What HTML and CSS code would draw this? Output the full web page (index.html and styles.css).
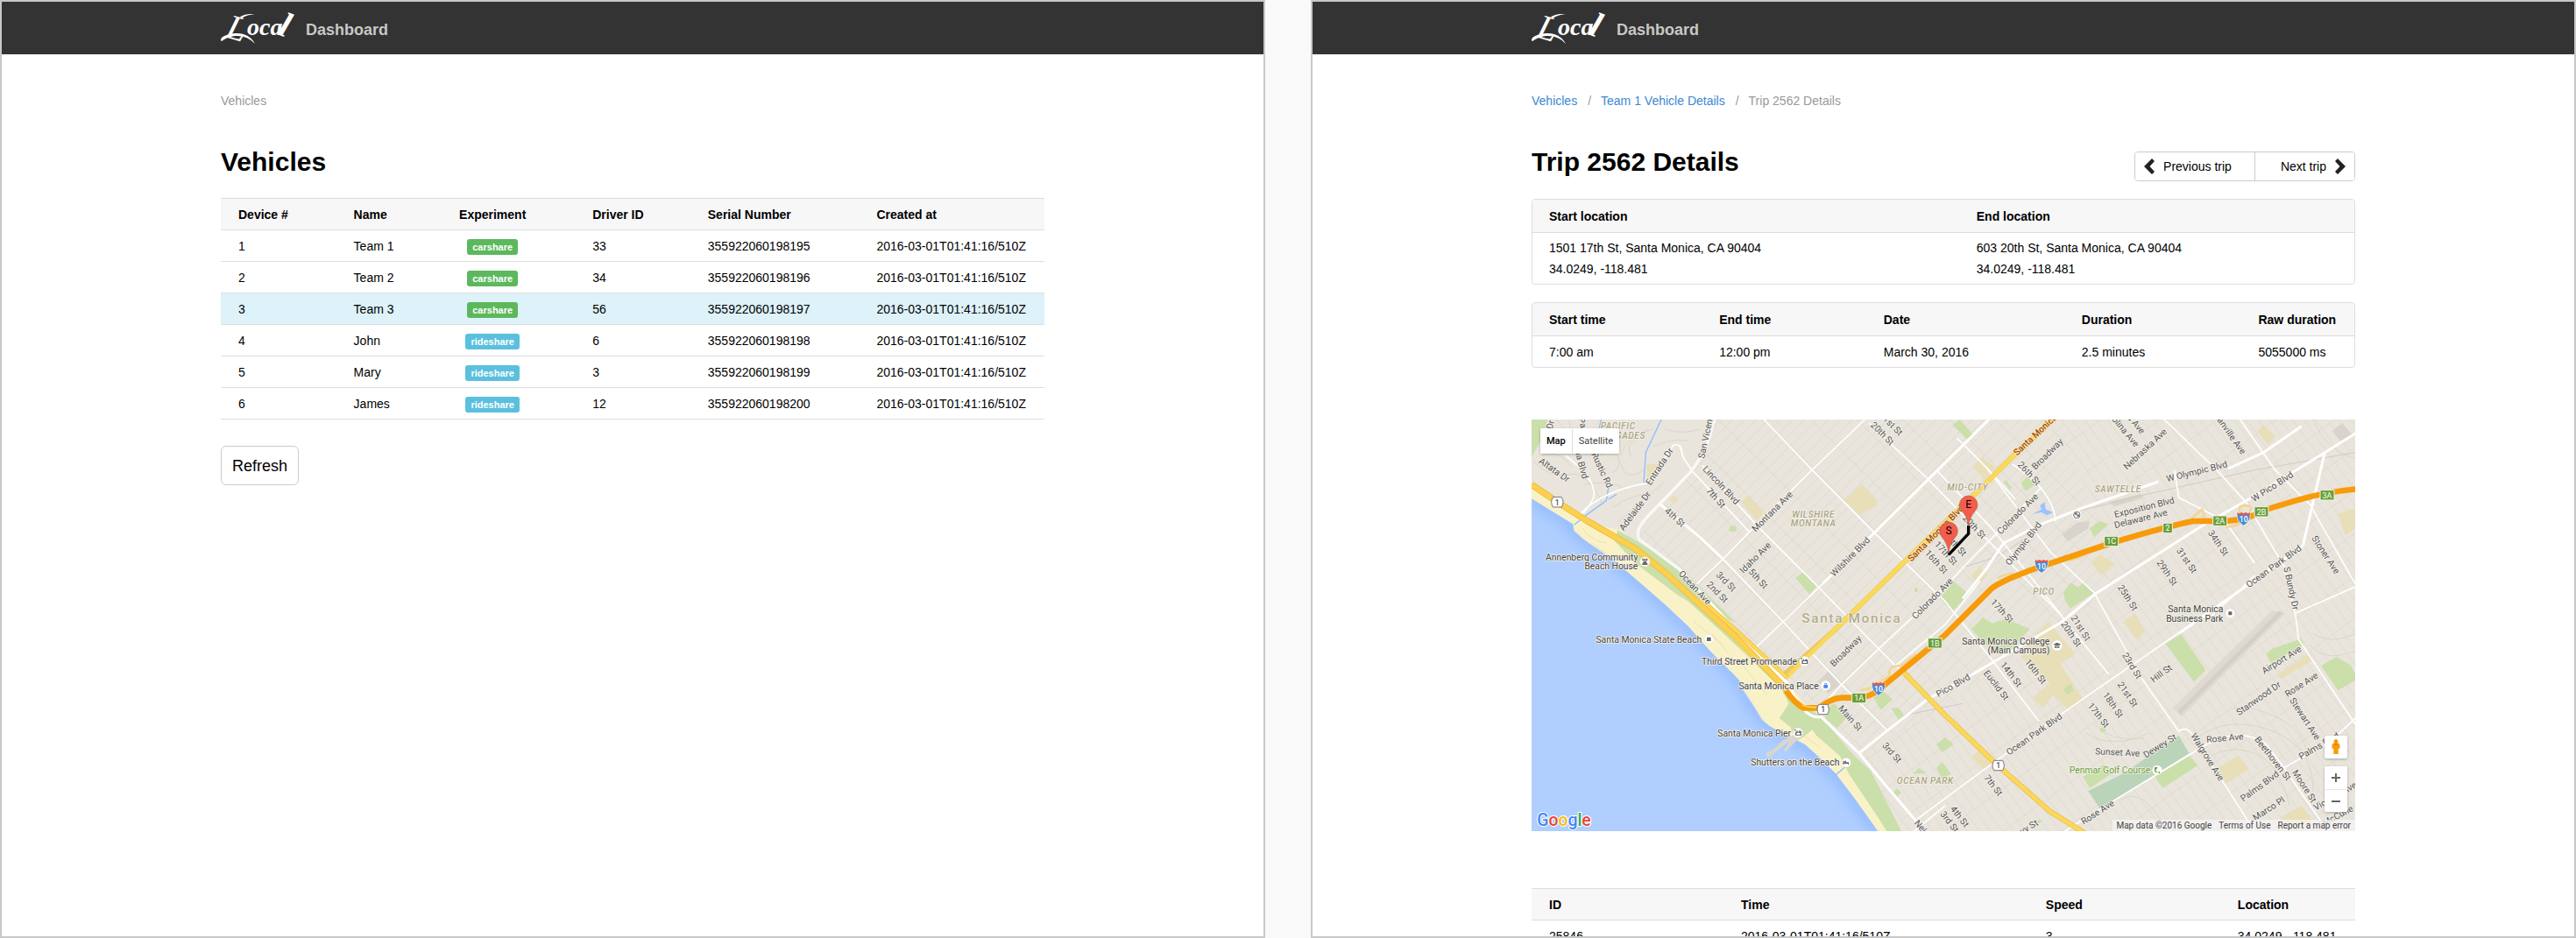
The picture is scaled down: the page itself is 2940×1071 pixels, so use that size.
FILE: index.html
```html
<!DOCTYPE html>
<html lang="en">
<head>
<meta charset="utf-8">
<title>Local Dashboard</title>
<link rel="stylesheet" href="styles.css">
</head>
<body>
<svg class="defs" aria-hidden="true">
  <defs>
    <symbol id="logo" viewBox="0 0 96 40" overflow="visible">
      <text class="logo-l" transform="translate(4 30) rotate(16)">L</text>
      <text class="logo-oca" x="30" y="28">oca</text>
      <text class="logo-end" transform="translate(64 27) rotate(20)">l</text>
      <path d="M22 7Q31 2 39 5Q31 4 24 9ZM1 31Q-1 34 1 35Q8 30 16 29Q30 28 39 38Q32 25 16 26Q6 27 1 31Z"/>
    </symbol>
  </defs>
</svg>

<section class="screen">
  <header class="topbar"><div class="wrap brand">
    <svg class="logo" role="img" aria-label="Local"><use href="#logo"/></svg><span>Dashboard</span>
  </div></header>
  <main class="wrap">
    <nav class="crumbs" aria-label="Breadcrumb"><span>Vehicles</span></nav>
    <div class="title-row"><h1>Vehicles</h1></div>
    <table class="list vehicles">
      <colgroup><col class="c-dev"><col class="c-name"><col class="c-exp"><col class="c-drv"><col class="c-ser"><col></colgroup>
      <thead><tr><th>Device #</th><th>Name</th><th class="mid">Experiment</th><th>Driver ID</th><th>Serial Number</th><th>Created at</th></tr></thead>
      <tbody>
        <tr><td>1</td><td>Team 1</td><td class="mid"><span class="tag car">carshare</span></td><td>33</td><td>355922060198195</td><td>2016-03-01T01:41:16/510Z</td></tr>
        <tr><td>2</td><td>Team 2</td><td class="mid"><span class="tag car">carshare</span></td><td>34</td><td>355922060198196</td><td>2016-03-01T01:41:16/510Z</td></tr>
        <tr class="active"><td>3</td><td>Team 3</td><td class="mid"><span class="tag car">carshare</span></td><td>56</td><td>355922060198197</td><td>2016-03-01T01:41:16/510Z</td></tr>
        <tr><td>4</td><td>John</td><td class="mid"><span class="tag ride">rideshare</span></td><td>6</td><td>355922060198198</td><td>2016-03-01T01:41:16/510Z</td></tr>
        <tr><td>5</td><td>Mary</td><td class="mid"><span class="tag ride">rideshare</span></td><td>3</td><td>355922060198199</td><td>2016-03-01T01:41:16/510Z</td></tr>
        <tr><td>6</td><td>James</td><td class="mid"><span class="tag ride">rideshare</span></td><td>12</td><td>355922060198200</td><td>2016-03-01T01:41:16/510Z</td></tr>
      </tbody>
    </table>
    <button class="refresh" type="button">Refresh</button>
  </main>
</section>

<section class="screen">
  <header class="topbar"><div class="wrap brand">
    <svg class="logo" role="img" aria-label="Local"><use href="#logo"/></svg><span>Dashboard</span>
  </div></header>
  <main class="wrap">
    <nav class="crumbs" aria-label="Breadcrumb"><a href="#vehicles">Vehicles</a><i>/</i><a href="#team-1">Team 1 Vehicle Details</a><i>/</i><span>Trip 2562 Details</span></nav>
    <div class="title-row trip">
      <h1>Trip 2562 Details</h1>
      <div class="pager">
        <button class="prev" type="button"><svg viewBox="0 0 12 18"><path d="M9 0L12 3L6.500 9L12 15L9 18L0 9Z"/></svg>Previous trip</button>
        <button class="next" type="button">Next trip<svg viewBox="0 0 12 18"><path d="M3 0L0 3L5.500 9L0 15L3 18L12 9Z"/></svg></button>
      </div>
    </div>
    <div class="card">
      <table>
        <colgroup><col class="c-start"><col></colgroup>
        <thead><tr><th>Start location</th><th>End location</th></tr></thead>
        <tbody><tr class="address"><td>1501 17th St, Santa Monica, CA 90404<br>34.0249, -118.481</td><td>603 20th St, Santa Monica, CA 90404<br>34.0249, -118.481</td></tr></tbody>
      </table>
    </div>
    <div class="card">
      <table>
        <colgroup><col class="c-t1"><col class="c-t2"><col class="c-t3"><col class="c-t4"><col></colgroup>
        <thead><tr><th>Start time</th><th>End time</th><th>Date</th><th>Duration</th><th>Raw duration</th></tr></thead>
        <tbody><tr><td>7:00 am</td><td>12:00 pm</td><td>March 30, 2016</td><td>2.5 minutes</td><td>5055000 ms</td></tr></tbody>
      </table>
    </div>

    <div class="map">
      <svg class="map-art" viewBox="24 27 2820 1410" role="img" aria-label="Map of Santa Monica">
        <defs>
          <pattern id="grid-a" width="112" height="29" patternUnits="userSpaceOnUse" patternTransform="rotate(-45)"><path class="lane" d="M0 1H112M1 0V29"/></pattern>
          <pattern id="grid-b" width="118" height="32" patternUnits="userSpaceOnUse" patternTransform="rotate(54)"><path class="lane" d="M0 1H118M1 0V32"/></pattern>
          <filter id="soft" x="-20%" y="-20%" width="140%" height="140%"><feGaussianBlur stdDeviation="22"/></filter>
          <clipPath id="sea-clip"><path id="sea-shape" d="M24 298L100 345L165 385L170 410L205 440L300 505L400 590L480 660L560 735L640 825L735 920L748 955L785 1010L812 1055L840 1078L900 1110L960 1140L1010 1185L1065 1240L1130 1325L1212 1440L24 1440Z"/></clipPath>
          <symbol id="i10" viewBox="0 0 50 50" overflow="visible">
            <path d="M3 4L10 8L18 4L25 8L32 4L40 8L47 4Q52 30 25 48Q-2 30 3 4Z" fill="#4a8ad4" stroke="#fff" stroke-width="2"/>
            <path d="M3 11L4 2L10 6L18 2L25 6L32 2L40 6L46 2L47 11Z" fill="#e8564b"/>
            <text class="shield" x="25" y="27">10</text>
          </symbol>
          <symbol id="ca1" viewBox="0 0 50 40" overflow="visible">
            <path d="M10 3H40Q50 20 40 37H10Q0 20 10 3Z" fill="#fff" stroke="#777" stroke-width="3" stroke-linejoin="round"/>
            <text class="route" x="25" y="21">1</text>
          </symbol>
        </defs>

        <rect x="24" y="27" width="2820" height="1410" fill="#e9e5dc"/>
        <path d="M640 27H1830L2050 600L1850 740L1150 1180L680 700L385 440L570 205Z" fill="url(#grid-a)"/>
        <path d="M1830 27H2844V1437H1300L1150 1180L1850 740L2050 600Z" fill="url(#grid-b)"/>

        <g class="lane curl">
          <path d="M30 170Q90 230 150 215T270 320M60 150Q120 130 160 190M110 27Q150 90 230 100T330 180T420 190M260 150Q290 60 340 27M330 150Q350 80 440 60M420 60Q330 110 370 160M200 250Q300 230 350 270M480 60Q540 80 600 60M440 120Q500 90 560 100M300 330Q350 290 430 280M320 380L480 240M300 210Q330 200 320 150M150 27Q170 60 130 110M30 60Q80 80 70 140"/>
          <path d="M1920 1100Q2010 1160 2140 1100M1950 1070Q2000 1130 2120 1120M2300 1120Q2400 1040 2550 1090T2700 1300M2350 1180Q2420 1140 2500 1170T2620 1350M2420 1020Q2460 1000 2560 1040T2680 1170M2700 27Q2740 130 2844 160M2690 800Q2740 860 2844 820M2700 760Q2760 800 2844 760M2040 1330Q2120 1280 2200 1437"/>
        </g>

        <g fill="#e8deb8">
          <path d="M1095 305L1155 248L1205 300L1205 320L1150 355Z"/><path d="M740 310L765 287L820 345L795 373Z"/><path d="M418 180H455V210L420 225ZM495 300L512 285L528 300L512 315Z"/>
          <path d="M1535 190L1565 155L1612 190L1575 235Z"/><path d="M1530 560L1560 530L1585 560L1550 600Z"/><path d="M1940 515L1970 490L2020 520L1975 560Z"/><path d="M2510 65L2530 45L2570 85L2545 115Z"/><path d="M2785 350L2844 330V400L2810 425Z"/>
          <path d="M1750 760L1795 720L1885 830L1835 865L1912 985L1860 1020L1810 970L1775 1015L1740 980L1800 930L1700 840Z"/><path d="M2050 720L2090 690L2125 755L2095 780Z"/><path d="M2375 1220L2445 1178L2480 1225L2400 1275ZM2575 905L2690 825L2700 850L2590 915ZM2590 1390L2660 1350L2700 1400L2640 1437ZM1530 1180L1560 1160L1600 1205L1570 1225Z"/>
        </g>
        <g fill="#cadfaa">
          <path d="M24 27H78L62 90L24 155Z"/><path d="M928 570L955 548L1000 598L975 625Z"/><ellipse cx="713" cy="401" rx="13" ry="10"/>
          <path d="M1465 45L1490 27L1537 80L1515 95ZM1640 240L1648 235L1668 260L1660 267ZM1700 245L1720 222L1750 250L1715 272Z"/><path d="M1422 640L1470 582L1520 625L1465 685Z"/><path d="M1935 400L1970 375L2000 385L1950 430Z"/>
          <path d="M1845 620L1870 585L1895 602L1915 583L1950 620L1868 675L1850 645Z"/><path d="M1530 745L1570 705L1600 725L1650 710L1730 745L1650 830L1580 800Z"/>
          <path d="M2195 795L2248 762L2332 885L2292 925Z"/><path d="M2540 830L2560 812L2660 778L2668 800L2555 860Z"/><path d="M2728 870L2780 840L2830 870L2844 900V920L2785 955Z"/>
          <path d="M2158 1250L2275 1180L2305 1212L2185 1290ZM1912 1250L1980 1210L2010 1240L1935 1290Z"/>
          <path d="M1410 1140L1440 1115L1470 1140L1430 1167ZM1410 1220L1430 1200L1460 1240L1430 1260ZM1195 980L1230 960L1260 985L1220 1022ZM1255 1015L1280 1015L1300 1040L1280 1055ZM1030 1020L1060 1000L1105 1045L1070 1085L1030 1050ZM1330 1240L1350 1220L1375 1240ZM1262 1305L1275 1290L1290 1305L1275 1318ZM1335 605L1345 602L1348 615L1336 620ZM1745 1410L1765 1397L1772 1405L1752 1415ZM1845 950L1870 932L1880 955L1858 970Z"/>
          <ellipse cx="1980" cy="1090" rx="10" ry="8"/>
        </g>
        <path d="M1930 1300L2050 1240L2240 1110L2275 1170L1970 1360Z" fill="#b9d4b8"/>
        <path d="M2220 1015L2560 680L2605 690L2250 1045Z" fill="#dedad1"/>
        <path d="M2242 1030L2590 686" stroke="#cbc6bd" stroke-width="14" stroke-dasharray="4 4" fill="none"/>
        <path d="M1840 420L1890 380L1935 375L1930 400L1860 445ZM1005 925L1040 890L1085 930L1040 965ZM2000 310L2110 282L2120 295L2020 325ZM2765 65L2800 40L2835 80L2800 110Z" fill="#d9d4cb"/>

        <path d="M24 248L120 312L210 380L330 405L400 470L530 560L650 650L760 790L900 930L1000 1050L1100 1150L1180 1240L1290 1437H1200L1020 1200L840 1090L720 900L540 730L165 400L24 310Z" fill="#faf2c7"/>
        <path d="M318 405L480 500L545 550L720 720L640 700L760 830L900 960L960 1010L1010 1040L1130 1180L1185 1230L1290 1437H1240L1210 1390L1110 1240L1080 1180L1000 1110L985 1090L960 1110L930 1130L910 1080L872 1050L905 1000L880 950L760 835L660 740L560 650L500 610L380 520L310 445Z" fill="#cadfaa"/>
        <use href="#sea-shape" fill="#b0cfff"/>
        <path d="M24 298L100 345L165 385L170 410L300 505L400 590L560 735L735 920L785 1010L840 1078L960 1140L1065 1240L1212 1440" clip-path="url(#sea-clip)" filter="url(#soft)" fill="none" stroke="#8fb8ff" stroke-width="36"/>
        <path d="M200 400Q220 440 280 450M230 450L300 500M440 560L540 640M580 720L680 800M640 760L700 830M740 860L830 970M930 1090L1010 1150" stroke="#e2d8a0" stroke-width="2" fill="none"/>
        <path d="M838 1170L885 1125L905 1115L935 1100L945 1112L895 1165L888 1160L905 1130L845 1178Z" fill="#dad6cd"/><circle cx="838" cy="1173" r="10" fill="#dad6cd"/>
        <path d="M468 27L415 140L408 245M262 27L240 130M170 388L210 355L280 305L288 255M288 300L315 283M1065 1245L1100 1215" stroke="#8fbdff" stroke-width="4" fill="none"/>
        <path d="M1740 350L1770 335L1765 320L1780 310L1785 335L1810 345L1790 355L1770 345Z" fill="#9cc2ff"/>

        <g class="rail"><path d="M1300 1040L1500 1000M1510 530L1610 500L1760 410M1900 340L2100 290L2500 200L2844 140"/></g>
        <g class="street">
          <path d="M820 27L985 200L1195 412L1440 650L1600 850L1760 1060"/>
          <path d="M530 115L545 160L575 205L770 412"/><path d="M610 185L800 395L1005 600L1210 810L1300 900"/>
          <path d="M590 590L680 505L770 412L985 200L1165 27"/><path d="M795 805L885 720L1020 590"/>
          <path d="M680 505L885 720L1085 935L1245 1095"/><path d="M1180 40L1380 230L1600 455L1830 690L2000 900"/>
          <path d="M1410 200L1600 400L1840 700M1480 90L1580 190L1680 300"/>
          <path d="M1000 1030L1085 935L1210 815L1440 600L1510 525L1770 260"/>
          <path d="M1245 890L1440 730L1560 580"/><path d="M1670 180Q1810 270 1818 375"/>
          <path d="M1580 190L1800 480L1950 620L2110 910L2240 1095Q2265 1075 2285 1105L2320 1160L2500 1437"/>
          <path d="M2190 27L2370 200L2470 310L2600 530L2640 700L2650 780L2844 1070"/>
          <path d="M2225 200L2240 295L2330 340L2400 378L2500 520"/>
          <path d="M2450 27L2570 200L2690 320L2844 590M2640 690L2844 600"/>
          <path d="M1345 1395L1440 1325L1595 1210L1910 985L2295 720"/>
          <path d="M1330 1440L1440 1350M1850 1437L2030 1325L2310 1155Q2440 1070 2540 1140L2600 1220L2750 1437"/>
          <path d="M2600 1220L2760 1130L2844 1050M2330 720L2460 600L2500 560"/>
          <path d="M190 350Q270 270 420 245L510 115Q540 105 540 150M200 350Q250 290 235 265Q230 220 140 150"/>
        </g>
        <g class="main">
          <path d="M465 318L600 430L680 505"/><path d="M1020 590L1200 412L1440 175L1590 27"/>
          <path d="M650 27L620 130L570 205L430 350Q370 410 395 440L530 540L720 745L900 930Q960 1060 1015 1045L1145 1170L1245 1290L1370 1437"/>
          <path d="M1145 1170L1245 1090L1380 985L1525 905L1840 720L1960 620L2330 385L2480 300L2740 140L2844 75"/>
          <path d="M1500 640L1580 540L1640 450L1770 385L1910 330L2170 240"/>
          <path d="M2410 195L2530 140L2660 50"/><path d="M2240 760L2460 605L2665 460Q2690 350 2740 140"/>
        </g>
        <path d="M650 27L620 130L570 205L430 350Q370 410 395 440L530 540" stroke="#e9e5dc" stroke-width="2" fill="none"/>

        <g fill="none" stroke-linejoin="round">
          <path d="M890 900L1060 750L1300 515L1550 275L1670 155L1810 27" stroke="#e9c868" stroke-width="18"/>
          <path d="M895 912L1060 750L1300 515L1550 275L1670 155L1810 27" stroke="#fbd857" stroke-width="14"/>
          <path d="M1300 895L1440 1040L1620 1212L1800 1370L1920 1445" stroke="#e6bd4d" stroke-width="18"/>
          <path d="M1300 895L1440 1040L1620 1212L1800 1370L1920 1445" stroke="#fbd857" stroke-width="14"/>
          <path d="M24 250L120 315L215 375L380 470L480 550L600 660L720 770L895 950" stroke="#e9b441" stroke-width="22"/>
          <path d="M24 250L120 315L215 375L380 470L480 550L600 660L720 770L895 950" stroke="#fbd04c" stroke-width="18"/>
          <path d="M600 640L720 745L900 912" stroke="#e9b441" stroke-width="14"/><path d="M600 640L720 745L900 912" stroke="#fbd857" stroke-width="11"/>
          <path d="M1150 955Q1190 950 1210 930L1250 905Q1240 870 1290 870L1340 830M1620 570Q1680 540 1700 575M1850 490Q1860 530 1930 480M2280 370Q2300 350 2320 335L2330 370M2400 395Q2460 390 2480 360Q2500 310 2450 325Q2440 350 2480 360" stroke="#f1d693" stroke-width="8"/>
          <path d="M895 955Q925 1000 955 1015H1010Q1050 980 1090 980H1140Q1190 980 1240 930L1440 765L1600 605Q1640 575 1770 530L2010 450Q2190 395 2290 375H2400Q2480 370 2540 335L2640 305Q2740 275 2850 265" stroke="#f79b0a" stroke-width="20"/>
          <path d="M950 1005Q980 1015 1000 1012" stroke="#fbd857" stroke-width="5"/>
        </g>

        <g class="lab">
          <text class="area" x="320" y="50">PACIFIC</text><text class="area" x="330" y="81">PALISADES</text>
          <text transform="translate(88 45) rotate(-75)">Dr</text><text transform="translate(198 38) rotate(75)">Pa</text>
          <text transform="translate(102 200) rotate(35)">Altata Dr</text><text transform="translate(195 180) rotate(75)">ua Blvd</text>
          <text transform="translate(265 200) rotate(65)">Rustic Rd</text><text transform="translate(462 188) rotate(-57)">Entrada Dr</text>
          <text transform="translate(622 80) rotate(-78)">San Vicente</text><text transform="translate(673 252) rotate(47)">Lincoln Blvd</text>
          <text transform="translate(655 295) rotate(48)">7th St</text><text transform="translate(378 340) rotate(-53)">Adelaide Dr</text>
          <text transform="translate(515 362) rotate(42)">4th St</text><text transform="translate(848 342) rotate(-45)">Montana Ave</text>
          <text transform="translate(1225 75) rotate(45)">20th St</text><text transform="translate(1255 42) rotate(45)">21st St</text>
          <text transform="translate(790 500) rotate(-45)">Idaho Ave</text><text transform="translate(800 572) rotate(47)">5th St</text>
          <text transform="translate(583 603) rotate(47)">Ocean Ave</text><text transform="translate(690 582) rotate(45)">3rd St</text>
          <text transform="translate(660 618) rotate(45)">2nd St</text><text transform="translate(1115 497) rotate(-45)">Wilshire Blvd</text>
          <text transform="translate(1396 640) rotate(-45)">Colorado Ave</text><text transform="translate(1100 820) rotate(-45)">Broadway</text>
          <text class="area" x="989" y="352">WILSHIRE</text><text class="area" x="989" y="383">MONTANA</text>
          <text class="city" x="1120" y="707">Santa Monica</text>
          <text class="blvd" transform="translate(1408 417) rotate(-45)">Santa Monica Blvd</text><text class="blvd" transform="translate(1748 80) rotate(-43)">Santa Monica</text>
          <text class="end" x="388" y="498">Annenberg Community</text><text class="end" x="388" y="528">Beach House</text>
          <text class="end" x="607" y="780">Santa Monica State Beach</text><text class="end" x="933" y="856">Third Street Promenade</text>
          <text class="end" x="1007" y="939">Santa Monica Place</text><text class="end" x="912" y="1101">Santa Monica Pier</text>
          <text class="end" x="1078" y="1202">Shutters on the Beach</text>
          <text transform="translate(1115 1050) rotate(48)">Main St</text><text transform="translate(1258 1168) rotate(48)">3rd St</text>
          <text class="area" x="1372" y="1264">OCEAN PARK</text><text transform="translate(1372 1440) rotate(50)">Nelson</text><text transform="translate(1410 515) rotate(47)">16th St</text>
        </g>
        <g class="lab" transform="translate(1410 0)">
          <text transform="translate(380 145) rotate(-45)">Broadway</text><text transform="translate(318 212) rotate(47)">26th St</text>
          <text transform="translate(278 350) rotate(-45)">Colorado Ave</text><text transform="translate(298 452) rotate(-52)">Olympic Blvd</text>
          <text transform="translate(715 128) rotate(-43)">Nebraska Ave</text><text transform="translate(632 50) rotate(50)">Carolina Ave</text>
          <text transform="translate(668 24) rotate(50)">Iowa Ave</text><text transform="translate(1002 70) rotate(55)">Granville Ave</text>
          <text transform="translate(892 205) rotate(-14)">W Olympic Blvd</text><text transform="translate(1150 257) rotate(-33)">W Pico Blvd</text>
          <text transform="translate(712 328) rotate(-14)">Exposition Blvd</text><text transform="translate(700 367) rotate(-14)">Delaware Ave</text>
          <text class="area" x="107" y="258">MID-CITY</text><text class="area" x="622" y="265">SAWTELLE</text><text class="area" x="368" y="616">PICO</text>
          <text transform="translate(965 450) rotate(55)">34th St</text><text transform="translate(857 510) rotate(55)">31st St</text>
          <text transform="translate(790 552) rotate(55)">29th St</text><text transform="translate(655 637) rotate(57)">25th St</text>
          <text transform="translate(225 683) rotate(47)">17th St</text><text transform="translate(494 741) rotate(57)">21st St</text>
          <text transform="translate(462 762) rotate(55)">20th St</text><text transform="translate(1155 530) rotate(-36)">Ocean Park Blvd</text>
          <text transform="translate(1333 490) rotate(57)">Stoner Ave</text><text transform="translate(1215 605) rotate(78)">S Bundy Dr</text>
          <text class="end" x="982" y="677">Santa Monica</text><text class="end" x="982" y="708">Business Park</text>
          <text transform="translate(130 395) rotate(47)">20th St</text><text transform="translate(64 454) rotate(47)">18th St</text><text transform="translate(33 485) rotate(47)">17th St</text>
        </g>
        <g class="lab" transform="translate(1410 720)">
          <text class="end" x="388" y="67">Santa Monica College</text><text class="end" x="388" y="98">(Main Campus)</text>
          <text transform="translate(57 218) rotate(-30)">Pico Blvd</text><text transform="translate(205 217) rotate(52)">Euclid St</text>
          <text transform="translate(256 180) rotate(52)">14th St</text><text transform="translate(340 170) rotate(52)">16th St</text>
          <text transform="translate(670 150) rotate(58)">23rd St</text><text transform="translate(770 177) rotate(-36)">Hill St</text>
          <text transform="translate(655 248) rotate(55)">21st St</text><text transform="translate(605 285) rotate(55)">18th St</text><text transform="translate(555 320) rotate(52)">17th St</text>
          <text transform="translate(335 385) rotate(-35)">Ocean Park Blvd</text><text transform="translate(620 447) rotate(3)">Sunset Ave</text>
          <text transform="translate(765 425) rotate(-32)">Dewey St</text><text class="end golf" x="733" y="509">Penmar Golf Course</text>
          <text transform="translate(928 463) rotate(58)">Walgrove Ave</text><text transform="translate(988 398) rotate(-5)">Rose Ave</text>
          <text transform="translate(1152 468) rotate(52)">Beethoven St</text><text transform="translate(1182 130) rotate(-32)">Airport Ave</text>
          <text transform="translate(1103 262) rotate(-35)">Stanwood Dr</text><text transform="translate(1250 215) rotate(-33)">Rose Ave</text>
          <text transform="translate(1262 332) rotate(57)">Stewart Ave</text><text transform="translate(1310 425) rotate(-30)">Palms Blvd</text>
          <text transform="translate(1107 563) rotate(-36)">Palms Blvd</text><text transform="translate(1138 640) rotate(-33)">Marco Pl</text>
          <text transform="translate(1260 563) rotate(57)">Moore St</text><text transform="translate(1400 650) rotate(-28)">McCune Ave</text>
          <text transform="translate(1365 597) rotate(-30)">Victoria Ave</text><text transform="translate(195 560) rotate(52)">7th St</text>
          <text transform="translate(80 667) rotate(52)">4th St</text><text transform="translate(45 685) rotate(52)">3rd St</text>
          <text transform="translate(300 712) rotate(-30)">Navy St</text><text transform="translate(552 652) rotate(-33)">Rose Ave</text>
        </g>

        <g fill="#fff" stroke="#d8d4cc" stroke-width="1">
          <circle cx="412" cy="514" r="17"/><circle cx="631" cy="779" r="16"/><circle cx="958" cy="855" r="17"/><circle cx="1031" cy="938" r="17"/><circle cx="936" cy="1100" r="17"/><circle cx="1101" cy="1202" r="16"/><circle cx="1891" cy="354" r="17"/><circle cx="2416" cy="691" r="16"/><circle cx="1823" cy="801" r="18"/><circle cx="2166" cy="1228" r="17"/>
        </g>
        <g fill="#666">
          <path d="M403 503H407V507H410V503H414V507H417V503H421V511H403ZM406 513H418V519H421V525H403V519H406ZM624 773H638V786H624Z"/>
          <path id="cam" d="M949 852H953V848H957V852H960L963 847L970 851V864H949ZM946 844H951V848H946ZM953 855V861H966V855Z" fill-rule="evenodd"/><use href="#cam" x="-22" y="245"/>
          <path d="M1024 936H1038V947H1024ZM1027 936V931H1035V936H1033V933H1029V936Z" fill="#4a86e8"/>
          <path d="M1090 1196H1093V1201H1110V1209H1107V1206H1093V1209H1090ZM1095 1196H1101V1200H1095ZM2410 685H2422V697H2410ZM1810 797L1823 791L1837 797L1823 803ZM1815 802L1823 806L1831 802V809H1815Z"/>
          <circle cx="1891" cy="354" r="11" fill="none" stroke="#666" stroke-width="3"/><circle cx="1888" cy="350" r="4"/><circle cx="1895" cy="356" r="4"/>
          <path d="M2157 1218L2168 1218L2160 1230L2168 1236H2160L2157 1230ZM2170 1234H2175V1239H2170Z" fill="#689f38"/>
        </g>

        <use href="#ca1" x="87" y="290" width="50" height="40"/><use href="#ca1" x="997" y="1000" width="50" height="40"/><use href="#ca1" x="1597" y="1192" width="50" height="40"/>
        <use href="#i10" x="1187" y="925" width="50" height="50"/><use href="#i10" x="1745" y="505" width="50" height="50"/><use href="#i10" x="2437" y="343" width="50" height="50"/>
        <g class="exit">
          <rect x="1121" y="964" width="48" height="34"/><text x="1145" y="982">1A</text>
          <rect x="1381" y="776" width="48" height="34"/><text x="1405" y="794">1B</text>
          <rect x="1985" y="427" width="48" height="34"/><text x="2009" y="445">1C</text>
          <rect x="2186" y="382" width="32" height="34"/><text x="2202" y="400">2</text>
          <rect x="2357" y="357" width="48" height="34"/><text x="2381" y="375">2A</text>
          <rect x="2499" y="326" width="48" height="34"/><text x="2523" y="344">2B</text>
          <rect x="2724" y="269" width="48" height="34"/><text x="2748" y="287">3A</text>
        </g>
        <path d="M1452 490L1520 418V390" stroke="#000" stroke-width="10" fill="none"/>
        <g class="pin">
          <path d="M1520 392Q1516 360 1497 340A31 31 0 1 1 1543 340Q1524 360 1520 392Z"/><text x="1520" y="319">E</text>
          <path d="M1452 484Q1448 450 1429 430A31 31 0 1 1 1475 430Q1456 450 1452 484Z"/><text x="1452" y="409">S</text>
        </g>
        <text class="google" x="43" y="1418"><tspan fill="#4285f4">G</tspan><tspan fill="#ea4335">o</tspan><tspan fill="#fbbc05">o</tspan><tspan fill="#4285f4">g</tspan><tspan fill="#34a853">l</tspan><tspan fill="#ea4335">e</tspan></text>
      </svg>
      <div class="map-type"><button type="button" class="on">Map</button><button type="button">Satellite</button></div>
      <div class="map-tools">
        <button type="button" aria-label="Street View"><svg viewBox="0 0 12 20"><path d="M6 0A3 3 0 0 1 8 5Q11 5 11 8V12H9V19H3V12H1V8Q1 5 4 5A3 3 0 0 1 6 0Z" fill="#f79b0a"/><path d="M4 6H8L6 8Z" fill="#c96f00"/></svg></button>
        <div class="zoom">
          <button type="button" aria-label="Zoom in"><svg viewBox="0 0 10 10"><path d="M4 0H6V4H10V6H6V10H4V6H0V4H4Z"/></svg></button>
          <button type="button" aria-label="Zoom out"><svg viewBox="0 0 10 10"><path d="M0 4H10V6H0Z"/></svg></button>
        </div>
      </div>
      <div class="credits"><span>Map data ©2016 Google</span><a href="#terms">Terms of Use</a><a href="#report">Report a map error</a></div>
    </div>

    <table class="list points">
      <colgroup><col class="c-id"><col class="c-time"><col class="c-speed"><col></colgroup>
      <thead><tr><th>ID</th><th>Time</th><th>Speed</th><th>Location</th></tr></thead>
      <tbody><tr><td>25846</td><td>2016-03-01T01:41:16/510Z</td><td>3</td><td>34.0249, -118.481</td></tr></tbody>
    </table>
  </main>
</section>
</body>
</html>
```
FILE: styles.css
```css
* { box-sizing: border-box; }

body {
  margin: 0;
  height: 100vh;
  overflow: hidden;
  display: grid;
  grid-template-columns: 1fr 1fr;
  grid-template-rows: 100%;
  gap: 52px;
  background: #f9f9f9;
  color: #000;
  font: 14px/20px "Liberation Sans", Arial, sans-serif;
}

button { font: inherit; color: inherit; background: #fff; border: 0; padding: 0; cursor: pointer; }
.defs { position: absolute; width: 0; height: 0; }

.screen { border: 2px solid #c8c8c8; background: #fff; overflow: hidden; min-width: 0; }
.wrap { max-width: 940px; margin: 0 auto; }

/* Top bar */
.topbar { background: #333; }
.brand { display: flex; align-items: center; gap: 1px; height: 60px; color: #c8c8c4; font-size: 18px; font-weight: bold; }
.brand span { padding-top: 4px; }
.logo { width: 96px; height: 40px; fill: #fff; overflow: visible; }
.logo-l { font: italic 40px "Liberation Serif", serif; }
.logo-oca { font: italic bold 28px "Liberation Serif", serif; }
.logo-end { font: italic bold 40px "Liberation Serif", serif; }

/* Page head */
.crumbs { padding-top: 43px; color: #999; }
.crumbs i { font-style: normal; padding: 0 11px 0 12px; }
.crumbs a { color: #3b87d4; text-decoration: none; }
.title-row { display: flex; justify-content: space-between; min-height: 40px; margin: 42px 0 19px; }
.title-row.trip { margin-bottom: 20px; }
h1 { margin: 0; font-size: 30px; line-height: 36px; }

.pager { display: flex; align-self: flex-end; height: 34px; border: 1px solid #ccc; border-radius: 4px; overflow: hidden; }
.pager button { display: flex; align-items: center; gap: 10px; }
.pager svg { width: 12px; height: 18px; fill: #222; }
.prev { padding: 0 26px 0 10px; }
.next { padding: 0 10px 0 29px; }
.pager .next { border-left: 1px solid #ccc; }

/* Tables */
table { width: 100%; border-collapse: separate; border-spacing: 0; table-layout: fixed; }
th, td { text-align: left; white-space: nowrap; }
th { background: #f7f7f7; }
.list th, .list td { padding: 0 0 0 20px; height: 36px; border-bottom: 1px solid #ddd; }
.list th { height: 37px; border-top: 1px solid #ddd; }
.list .mid { text-align: center; padding: 0; }
.list .active td { background: #ddf2f9; }
.c-dev, .c-drv { width: 14%; }
.c-name { width: 9%; }
.c-exp { width: 20%; }
.c-ser { width: 20.5%; }
.c-id, .c-speed { width: 23.3%; }
.c-time { width: 37%; }

.tag { display: inline-block; padding: 0 6px; border-radius: 3px; color: #fff; font-size: 11px; font-weight: bold; line-height: 18px; vertical-align: middle; }
.car { background: #5cb85c; }
.ride { background: #5bc0de; }

.refresh { margin-top: 30px; height: 45px; padding: 0 12px; border: 1px solid #ccc; border-radius: 6px; font-size: 18px; }

.card { border: 1px solid #ddd; border-radius: 4px; overflow: hidden; }
.card + .card { margin-top: 20px; }
.card th { height: 38px; border-bottom: 1px solid #ddd; padding: 0 0 0 19px; }
.card td { height: 35px; padding: 0 0 0 19px; }
.card .address td { padding: 5px 0 5px 19px; line-height: 24px; }
.c-start { width: 52%; }
.c-t1 { width: 20.7%; }
.c-t2 { width: 20%; }
.c-t3 { width: 24.1%; }
.c-t4 { width: 21.5%; }

/* Map */
.map { position: relative; margin: 59px 0 65px; font-family: Roboto, sans-serif; color: #444; }
.map-art { display: block; width: 100%; }
.lane { fill: none; stroke: #dbd6ca; stroke-width: 2; }
.curl path { stroke-width: 3; }
.street { fill: none; stroke: #fff; stroke-width: 5; stroke-linejoin: round; }
.main { fill: none; stroke: #fff; stroke-width: 9; stroke-linejoin: round; }
.rail { fill: none; stroke: #cfcbc3; stroke-width: 3; }
.map-art text { font-family: Roboto, sans-serif; text-anchor: middle; dominant-baseline: central; }
.lab text { font-size: 31px; fill: #555; stroke: #f4f1ea; stroke-width: 5; paint-order: stroke; stroke-linejoin: round; }
.lab .end { text-anchor: end; fill: #444; }
.lab .golf { fill: #689f38; }
.lab .area { font-size: 30px; font-weight: 500; font-style: italic; letter-spacing: 2px; fill: #aaa583; }
.lab .city { font-size: 46px; font-weight: 500; letter-spacing: 5px; fill: #b3ad8c; }
.lab .blvd { fill: #9c4a1a; font-weight: 500; stroke: #fbe9a8; }
.map-art .shield { font-size: 26px; font-weight: 500; fill: #fff; }
.map-art .route { font-size: 26px; font-weight: 500; fill: #555; }
.exit rect { fill: #689f38; stroke: #f4f1ea; stroke-width: 3; }
.exit text { font-size: 27px; fill: #fff; }
.pin path { fill: #f55c4e; stroke: #9c6b3c; stroke-width: 2; }
.pin text { font-size: 36px; fill: #000; }
.map-art .google { font-size: 58px; font-weight: 500; text-anchor: start; dominant-baseline: auto; stroke: #fff; stroke-width: 6; paint-order: stroke; }

.map-type { position: absolute; left: 10px; top: 10px; display: flex; height: 29px; background: #fff; border-radius: 2px; box-shadow: 0 1px 3px #0004; font-size: 11px; }
.map-type button { padding: 0 7px; border-radius: 2px; }
.map-type button + button { border-left: 1px solid #ddd; }
.map-type .on { color: #000; font-weight: 500; }

.map-tools { position: absolute; right: 9px; bottom: 22px; display: grid; gap: 9px; }
.map-tools button { display: grid; place-items: center; width: 26px; height: 26px; border-radius: 2px; box-shadow: 0 1px 3px #0004; }
.map-tools button svg { height: 18px; width: 12px; fill: #666; }
.zoom { background: #fff; box-shadow: 0 1px 3px #0004; border-radius: 2px; }
.map-tools .zoom button { box-shadow: none; }
.zoom button + button { border-top: 1px solid #e6e6e6; }
.map-tools .zoom button svg { width: 10px; height: 10px; }

.credits { position: absolute; right: 0; bottom: 0; display: flex; gap: 8px; padding: 0 5px 0 4px; background: #f5f5f5c0; font-size: 10px; line-height: 13px; }
.credits a { color: #444; text-decoration: none; }
```
